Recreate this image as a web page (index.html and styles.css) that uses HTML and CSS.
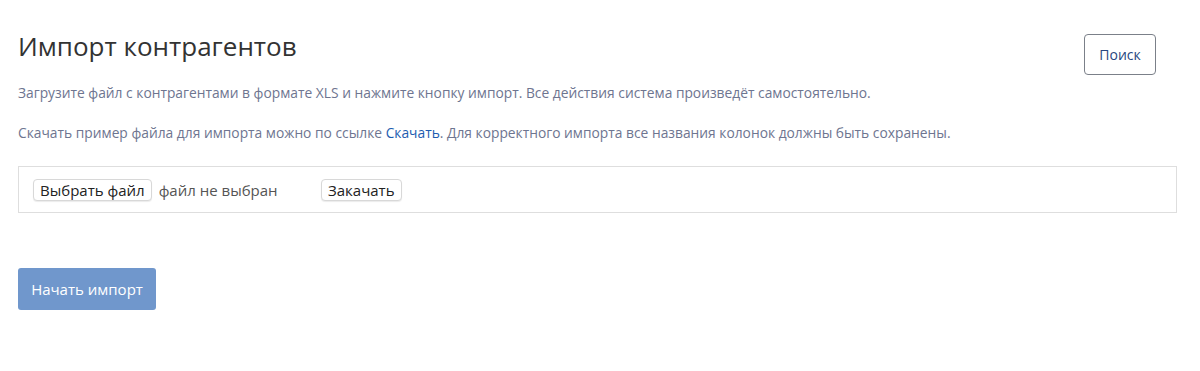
FILE: index.html
```html
<!DOCTYPE html>
<html lang="ru">
<head>
<meta charset="utf-8">
<title>Импорт контрагентов</title>
<link rel="stylesheet" href="styles.css">
</head>
<body>
<div class="page">
  <div class="header">
    <h1 class="title">Импорт контрагентов</h1>
    <button class="btn-search" type="button">Поиск</button>
  </div>
  <p class="note note-first">Загрузите файл с контрагентами в формате XLS и нажмите кнопку импорт. Все действия система произведёт самостоятельно.</p>
  <p class="note">Скачать пример файла для импорта можно по ссылке <a class="link" href="#">Скачать</a>. Для корректного импорта все названия колонок должны быть сохранены.</p>
  <div class="upload-box">
    <label class="file-input">
      <span class="native-btn">Выбрать файл</span>
      <span class="file-name">файл не выбран</span>
    </label>
    <span class="native-btn">Закачать</span>
  </div>
  <button class="btn-import" type="button">Начать импорт</button>
</div>
</body>
</html>
```
FILE: styles.css
```css
* { box-sizing: border-box; }
html, body { margin: 0; padding: 0; background: #fff; }
body { font-family: "Open Sans", "Noto Sans", sans-serif; color: #333; }
.page { padding: 0 23px 0 18px; }
.header {
  display: flex;
  justify-content: space-between;
  align-items: flex-start;
  padding-top: 28px;
}
.title {
  margin: 0;
  font-size: 26px;
  font-weight: 400;
  line-height: 36px;
  color: #333;
}
.btn-search {
  margin-top: 6px;
  margin-right: 21px;
  width: 72px;
  height: 41px;
  border: 1px solid #7b8089;
  border-radius: 4px;
  background: #fff;
  color: #284780;
  font-family: "Open Sans", sans-serif;
  font-size: 14px;
  font-weight: 500;
  padding: 0;
}
.note {
  margin: 0;
  font-size: 13.8px;
  line-height: 20px;
  color: #6e7590;
}
.note-first { margin-top: 8px; margin-bottom: 20px; }
.link { color: #1d5cb0; text-decoration: none; }
.upload-box {
  margin-top: 23px;
  display: flex;
  align-items: center;
  height: 47px;
  border: 1px solid #dedede;
  padding-left: 14px;
}
.file-input { display: flex; align-items: center; width: 288px; }
.native-btn {
  display: inline-flex;
  align-items: center;
  height: 22px;
  padding: 0 6px;
  border: 1px solid #d8d8d8;
  border-radius: 4px;
  background: #fff;
  box-shadow: 0 1px 1px rgba(0,0,0,0.08);
  font-size: 15px;
  color: #222;
}
.file-name { margin-left: 7px; font-size: 15px; color: #555; }
.btn-import {
  display: block;
  margin-top: 55px;
  width: 138px;
  height: 42px;
  border: none;
  border-radius: 3px;
  background: #7097cc;
  color: #fff;
  font-family: "Open Sans", sans-serif;
  font-size: 15px;
  padding: 0;
}
```
